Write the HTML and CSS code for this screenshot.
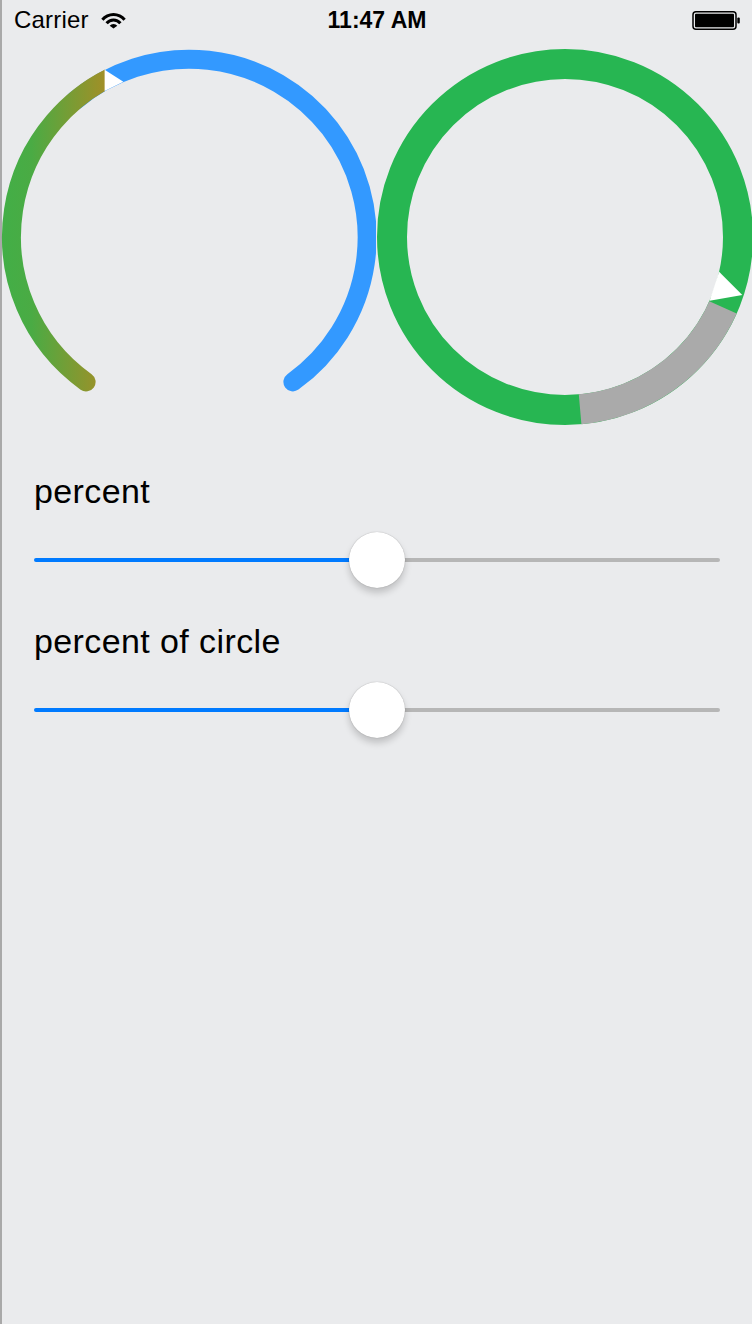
FILE: index.html
```html
<!DOCTYPE html>
<html lang="en">
<head>
<meta charset="utf-8">
<title>Gauges</title>
<link rel="stylesheet" href="styles.css">
</head>
<body>
<div class="screen">
  <header class="status">
    <div class="status-left">
      <span class="carrier">Carrier</span>
      <svg class="wifi" width="25" height="17" viewBox="0 0 25 17">
        <path d="M0.24 6.72 A16 16 0 0 1 24.76 6.72 L22.46 8.64 A13 13 0 0 0 2.54 8.64 Z"/>
        <path d="M4.46 10.25 A10.5 10.5 0 0 1 20.54 10.25 L18.25 12.18 A7.5 7.5 0 0 0 6.75 12.18 Z"/>
        <path d="M12.5 16.6 L8.67 13.79 A5 5 0 0 1 16.33 13.79 Z"/>
      </svg>
    </div>
    <div class="time">11:47 AM</div>
    <div class="status-right">
      <svg class="battery" width="48" height="19" viewBox="0 0 48 19">
        <rect x="1" y="0.75" width="43" height="17.5" rx="3" ry="3" fill="none" stroke="#000" stroke-width="1.5"/>
        <rect x="3" y="2.75" width="39" height="13.5" rx="1" ry="1" fill="#000"/>
        <rect x="45.3" y="6.5" width="2.5" height="6" rx="1" ry="1" fill="#000"/>
      </svg>
    </div>
  </header>

  <section class="gauges">
    <svg class="gauge" width="376" height="390" viewBox="0 40 376 390">
      <defs>
        <linearGradient id="arcGrad" gradientUnits="userSpaceOnUse" x1="0" y1="0" x2="105" y2="0">
          <stop offset="0" stop-color="#42af47"/>
          <stop offset="0.3" stop-color="#4aab44"/>
          <stop offset="1" stop-color="#a18f27"/>
        </linearGradient>
        <clipPath id="arcClip">
          <rect x="0" y="40" width="105" height="390"/>
        </clipPath>
      </defs>
      <path d="M75.1 100.6 A178 178 0 1 1 292.9 381.9" fill="none" stroke="#3399ff" stroke-width="19" stroke-linecap="round"/>
      <path d="M86.1 381.9 A178 178 0 0 1 134.5 67.7" fill="none" stroke="url(#arcGrad)" stroke-width="19" stroke-linecap="round" clip-path="url(#arcClip)"/>
      <polygon points="104.6,69.8 104.6,91 123.4,81.7" fill="#ffffff"/>
    </svg>
    <svg class="ring" width="376" height="390" viewBox="376 40 376 390">
      <circle cx="565" cy="237" r="173" fill="none" stroke="#27b652" stroke-width="30"/>
      <path d="M723.0 307.4 A173 173 0 0 1 580.1 409.3" fill="none" stroke="#aaaaaa" stroke-width="30"/>
      <polygon points="719.1,271.7 709.6,300.8 742.3,295" fill="#ffffff"/>
    </svg>
  </section>

  <section class="controls">
    <div class="control">
      <div class="control-label">percent</div>
      <div class="slider" style="--v: 0.5">
        <div class="track"><div class="track-fill"></div><div class="track-rest"></div></div>
        <div class="thumb"></div>
      </div>
    </div>
    <div class="control">
      <div class="control-label">percent of circle</div>
      <div class="slider" style="--v: 0.5">
        <div class="track"><div class="track-fill"></div><div class="track-rest"></div></div>
        <div class="thumb"></div>
      </div>
    </div>
  </section>
</div>
</body>
</html>
```

FILE: styles.css
```css
html, body {
  margin: 0;
  padding: 0;
}

body {
  background: #eaebed;
  font-family: "Liberation Sans", Arial, sans-serif;
  color: #000;
}

.screen {
  width: 752px;
  height: 1324px;
  overflow: hidden;
  background: #eaebed;
  box-shadow: inset 2px 0 0 #a9a9a9;
}

.status {
  height: 40px;
  display: grid;
  grid-template-columns: 1fr auto 1fr;
  align-items: center;
  padding: 0 12px 0 14px;
}

.status-left {
  display: flex;
  align-items: center;
  gap: 12px;
}

.carrier {
  font-size: 24px;
  letter-spacing: 0.2px;
}

.wifi {
  display: block;
  fill: #000;
}

.time {
  font-size: 23px;
  font-weight: bold;
}

.status-right {
  display: flex;
  justify-content: flex-end;
  align-items: center;
}

.battery {
  display: block;
}

.gauges {
  display: flex;
  height: 390px;
}

.gauge,
.ring {
  display: block;
  flex: none;
}

.controls {
  display: flex;
  flex-direction: column;
  gap: 33px;
  padding: 41px 32px 0 34px;
}

.control {
  display: flex;
  flex-direction: column;
  gap: 21px;
}

.control-label {
  font-size: 34px;
  line-height: 40px;
  height: 40px;
  letter-spacing: 0.4px;
}

.slider {
  position: relative;
  height: 56px;
  display: flex;
  align-items: center;
}

.track {
  flex: 1;
  height: 4px;
  display: flex;
  border-radius: 2px;
  overflow: hidden;
}

.track-fill {
  width: calc(28px + var(--v) * (100% - 56px));
  background: #007aff;
}

.track-rest {
  flex: 1;
  background: #b6b6b6;
}

.thumb {
  position: absolute;
  top: 0;
  left: calc(var(--v) * (100% - 56px));
  width: 56px;
  height: 56px;
  border-radius: 50%;
  background: #fff;
  box-shadow: 0 5px 7px rgba(0, 0, 0, 0.18), 0 0 1px rgba(0, 0, 0, 0.35);
}
```
